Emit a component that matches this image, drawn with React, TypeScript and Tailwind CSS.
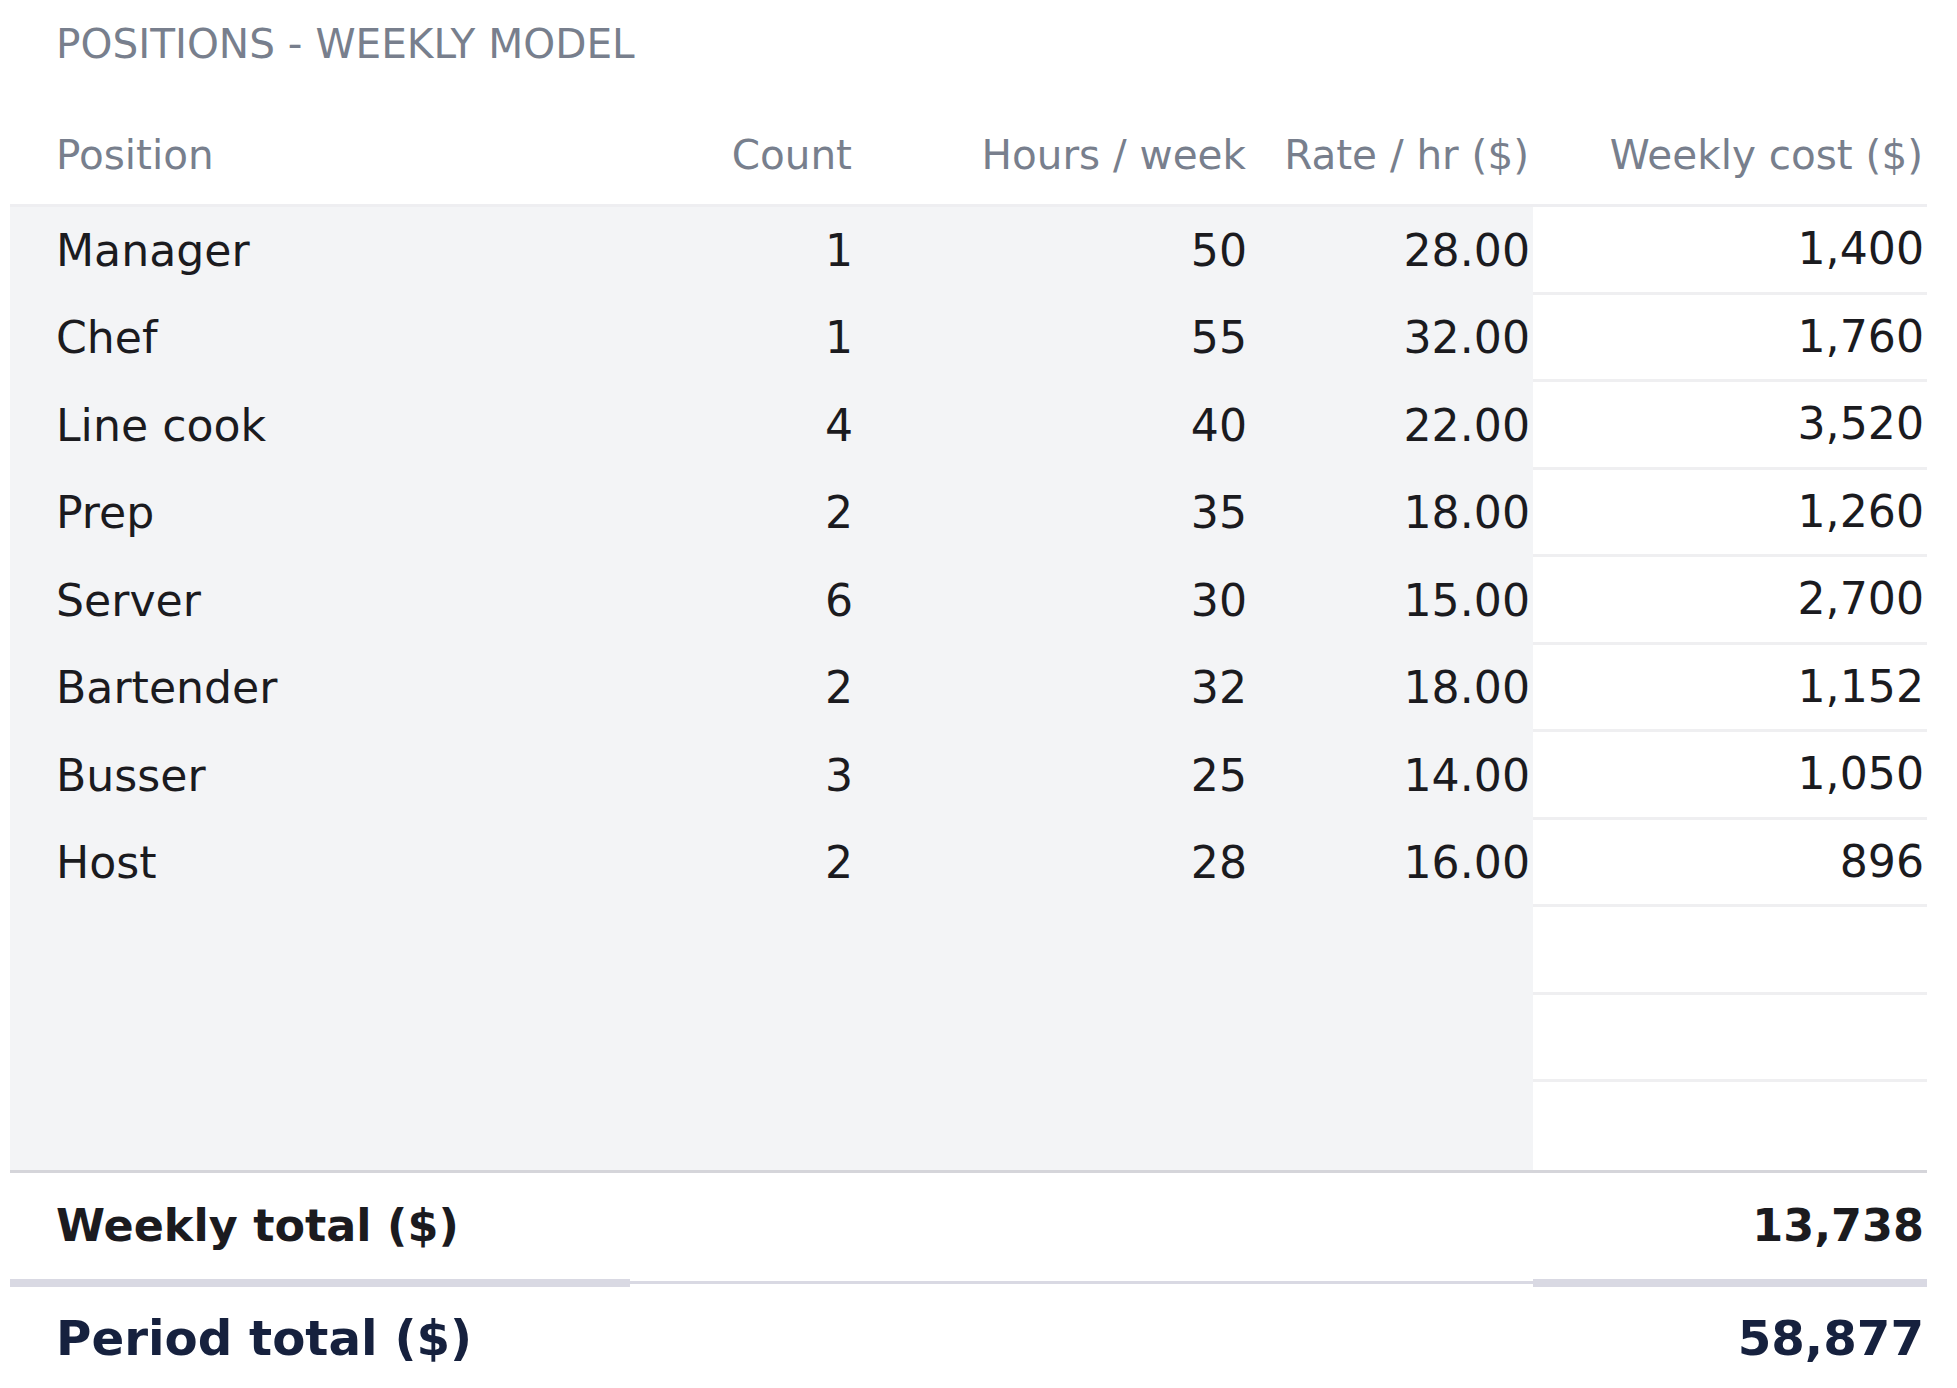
import React from "react";

const rows: [string, string, string, string, string][] = [
  ["Manager", "1", "50", "28.00", "1,400"],
  ["Chef", "1", "55", "32.00", "1,760"],
  ["Line cook", "4", "40", "22.00", "3,520"],
  ["Prep", "2", "35", "18.00", "1,260"],
  ["Server", "6", "30", "15.00", "2,700"],
  ["Bartender", "2", "32", "18.00", "1,152"],
  ["Busser", "3", "25", "14.00", "1,050"],
  ["Host", "2", "28", "16.00", "896"],
  ["", "", "", "", ""],
  ["", "", "", "", ""],
  ["", "", "", "", ""],
];

const grid = "grid grid-cols-[620px_226px_394px_283px_394px]";

export default function App() {
  return (
    <div
      className="w-[1957px] h-[1388px] bg-white pl-[10px] pr-[30px] overflow-hidden"
      style={{ fontFamily: '"DejaVu Sans", "Noto Sans", sans-serif' }}
    >
      <div className="h-[87px] flex items-center pl-[46px] text-[40.6px] leading-[48px] text-[#787f8d]">
        POSITIONS - WEEKLY MODEL
      </div>

      <div className={`${grid} pt-[44px] pb-[25px] text-[40.5px] leading-[48px] text-[#787f8d] border-b-[3px] border-[#eeeef1]`}>
        <div className="pl-[46px]">Position</div>
        <div className="text-right pr-[4px]">Count</div>
        <div className="text-right pr-[4px]">Hours / week</div>
        <div className="text-right pr-[4px]">Rate / hr ($)</div>
        <div className="text-right pr-[4px]">Weekly cost ($)</div>
      </div>

      <div>
        {rows.map((r, i) => (
          <div key={i} className={`${grid} h-[87.5px] text-[44.2px] leading-[52px] text-[#1b1b1f]`}>
            <div className="bg-[#f3f4f6] pl-[46px] flex items-center">{r[0]}</div>
            <div className="bg-[#f3f4f6] pr-[3px] flex items-center justify-end">{r[1]}</div>
            <div className="bg-[#f3f4f6] pr-[3px] flex items-center justify-end">{r[2]}</div>
            <div className="bg-[#f3f4f6] pr-[3px] flex items-center justify-end">{r[3]}</div>
            <div
              className={`pr-[3px] flex items-center justify-end ${
                i < rows.length - 1 ? "border-b-[3px] border-[#efeff1]" : ""
              }`}
            >
              {r[4]}
            </div>
          </div>
        ))}
      </div>

      <div className="border-t-[3px] border-[#d5d5da]">
        <div className="h-[106px] flex items-center justify-between text-[44.5px] leading-[52px] font-bold text-[#1b1b1f]">
          <div className="pl-[46px]">Weekly total ($)</div>
          <div className="pr-[3px]">13,738</div>
        </div>
        <div className="h-[8px] flex items-center">
          <div className="w-[620px] h-[8px] bg-[#d9d9e3]" />
          <div className="flex-1 h-[3px] bg-[#d9d9e3]" />
          <div className="w-[394px] h-[8px] bg-[#d9d9e3]" />
        </div>
        <div className="h-[103px] flex items-center justify-between text-[48.3px] leading-[56px] font-bold text-[#16213e]">
          <div className="pl-[46px]">Period total ($)</div>
          <div className="pr-[3px]">58,877</div>
        </div>
      </div>
    </div>
  );
}
